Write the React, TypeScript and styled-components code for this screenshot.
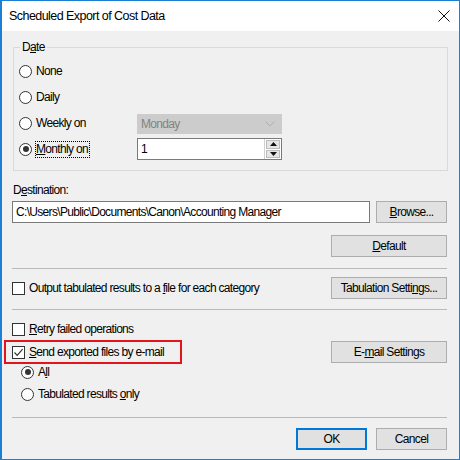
import React from 'react';
import styled, {createGlobalStyle} from 'styled-components';

const GlobalStyle = createGlobalStyle`
  html, body {
    margin: 0;
    padding: 0;
    background: #ffffff;
  }
  * {
    box-sizing: border-box;
  }
`

const Window = styled.div`
  width: 460px;
  height: 460px;
  border: 1px solid #1b80d4;
  border-left-width: 2px;
  background: #f0f0f0;
  display: flex;
  flex-direction: column;
  font-family: "Liberation Sans", Arial, sans-serif;
  font-size: 12px;
  letter-spacing: -0.68px;
  color: #000;
`

const TitleBar = styled.div`
  height: 30px;
  background: #ffffff;
  display: flex;
  align-items: center;
  justify-content: space-between;
  padding: 0 8px 0 7px;
  font-size: 12.5px;
  letter-spacing: -0.55px;
`

const Close = styled.div`
  width: 14px;
  height: 14px;
  display: flex;
  align-items: center;
  justify-content: center;
`

const Client = styled.div`
  flex: 1;
  display: flex;
  flex-direction: column;
  padding: 0 12px 0 10px;
`

const Group = styled.fieldset`
  margin: 9px -1px 0 1px;
  padding: 6px 4px 10px 5px;
  border: 1px solid #d9d9d9;
  min-width: 0;
`

const Legend = styled.legend`
  padding: 0 2px;
  margin-left: 1px;
  line-height: 14px;
`

const DateGrid = styled.div`
  display: grid;
  grid-template-columns: 118px 145px;
  grid-auto-rows: 22px;
  row-gap: 4px;
  align-items: center;
`

const U = styled.span`
  text-decoration: underline;
  text-underline-offset: 1px;
`

const OptionLabel = styled.label<{ $focus?: boolean }>`
  display: inline-flex;
  align-items: center;
  gap: 4px;
  line-height: 15px;
  white-space: nowrap;

  span.text {
    outline: ${p => p.$focus ? '1px dotted #000' : 'none'};
    outline-offset: 0;
    padding-right: ${p => p.$focus ? '1px' : '0'};
  }
`

const RadioCircle = styled.span<{ $on?: boolean }>`
  width: 13px;
  height: 13px;
  border-radius: 50%;
  border: 1px solid #333;
  background: #fff;
  display: inline-flex;
  align-items: center;
  justify-content: center;
  flex: none;

  &::after {
    content: '';
    width: 6px;
    height: 6px;
    border-radius: 50%;
    background: ${p => p.$on ? '#333' : 'transparent'};
  }
`

const CheckBox = styled.span`
  width: 13px;
  height: 13px;
  border: 1px solid #333;
  background: #fff;
  display: inline-flex;
  align-items: center;
  justify-content: center;
  flex: none;
`

const Combo = styled.div`
  height: 20px;
  margin-top: 1px;
  background: #cccccc;
  border: 1px solid #cccccc;
  color: #838383;
  display: flex;
  align-items: center;
  justify-content: space-between;
  padding: 0 6px 0 3px;
`

const SpinBox = styled.div`
  height: 22px;
  border: 1px solid #7a7a7a;
  background: #fff;
  display: flex;
  align-items: center;
  justify-content: space-between;
  padding: 0 0 0 3px;
`

const SpinButtons = styled.div`
  display: flex;
  flex-direction: column;
  gap: 1px;
  padding: 1px;
  height: 100%;
  width: 17px;
  border-left: 1px solid #d0d0d0;
`

const SpinButton = styled.div`
  flex: 1;
  background: #e6e6e6;
  border: 1px solid #bcbcbc;
  display: flex;
  align-items: center;
  justify-content: center;
`

const FieldLabel = styled.div`
  margin-top: 12px;
  line-height: 14px;
  padding-left: 1px;
`

const Row = styled.div<{ $top?: number; $h?: number }>`
  display: flex;
  align-items: center;
  justify-content: space-between;
  gap: 6px;
  margin-top: ${p => p.$top ?? 0}px;
  height: ${p => p.$h ?? 22}px;
`

const EndRow = styled(Row)`
  justify-content: flex-end;
  gap: 9px;
`

const TextBox = styled.div`
  flex: 1;
  height: 22px;
  border: 1px solid #7a7a7a;
  background: #fff;
  display: flex;
  align-items: center;
  padding-left: 3px;
  white-space: nowrap;
  overflow: hidden;
`

const Button = styled.div<{ $w?: number; $default?: boolean }>`
  width: ${p => p.$w ?? 71}px;
  height: 22px;
  flex: none;
  background: #e1e1e1;
  border: 1px solid ${p => p.$default ? '#0078d7' : '#adadad'};
  box-shadow: ${p => p.$default ? 'inset 0 0 0 1px #0078d7' : 'none'};
  display: flex;
  align-items: center;
  justify-content: center;
  white-space: nowrap;
`

const Separator = styled.div<{ $top: number }>`
  height: 1px;
  background: #b9b9b9;
  margin-top: ${p => p.$top}px;
`

const Indent = styled.div<{ $top?: number }>`
  padding-left: 9px;
  margin-top: ${p => p.$top ?? 0}px;
  height: 16px;
  display: flex;
  align-items: center;
`

const Highlight = styled.div`
  height: 24px;
  margin-left: -8px;
  width: 178px;
  border: 2px solid #e3141c;
  padding-left: 6px;
  display: flex;
  align-items: center;
`

const Radio = ({on, children, focus}: { on?: boolean, children: React.ReactNode, focus?: boolean }) =>
    <OptionLabel $focus={focus}>
        <RadioCircle $on={on}/>
        <span className="text">{children}</span>
    </OptionLabel>

const Check = ({on, children}: { on?: boolean, children: React.ReactNode }) =>
    <OptionLabel>
        <CheckBox>
            {on && <svg width="11" height="11" viewBox="0 0 11 11">
                <path d="M1.5 5.5 L4.2 8.3 L9.6 2.2" fill="none" stroke="#333" strokeWidth="1.2"/>
            </svg>}
        </CheckBox>
        <span className="text">{children}</span>
    </OptionLabel>

const App = () => {
    return (
        <>
            <GlobalStyle/>
            <Window>
                <TitleBar>
                    <span>Scheduled Export of Cost Data</span>
                    <Close>
                        <svg width="12" height="12" viewBox="0 0 12 12">
                            <path d="M0.5 0.5 L11.5 11.5 M11.5 0.5 L0.5 11.5" stroke="#111" strokeWidth="1"/>
                        </svg>
                    </Close>
                </TitleBar>
                <Client>
                    <Group>
                        <Legend>D<U>a</U>te</Legend>
                        <DateGrid>
                            <Radio>None</Radio>
                            <span/>
                            <Radio>Daily</Radio>
                            <span/>
                            <Radio>Weekly on</Radio>
                            <Combo>
                                <span>Monday</span>
                                <svg width="10" height="6" viewBox="0 0 10 6">
                                    <path d="M0.5 0.5 L5 5 L9.5 0.5" fill="none" stroke="#b0b0b0" strokeWidth="1"/>
                                </svg>
                            </Combo>
                            <Radio on focus><U>M</U>onthly on</Radio>
                            <SpinBox>
                                <span>1</span>
                                <SpinButtons>
                                    <SpinButton>
                                        <svg width="7" height="4" viewBox="0 0 7 4"><path d="M0 4 L3.5 0 L7 4 Z" fill="#111"/></svg>
                                    </SpinButton>
                                    <SpinButton>
                                        <svg width="7" height="4" viewBox="0 0 7 4"><path d="M0 0 L3.5 4 L7 0 Z" fill="#111"/></svg>
                                    </SpinButton>
                                </SpinButtons>
                            </SpinBox>
                        </DateGrid>
                    </Group>

                    <FieldLabel>D<U>e</U>stination:</FieldLabel>
                    <Row $top={4}>
                        <TextBox>C:\Users\Public\Documents\Canon\Accounting Manager</TextBox>
                        <Button><U>B</U>rowse...</Button>
                    </Row>
                    <EndRow $top={12}>
                        <Button $w={116}><U>D</U>efault</Button>
                    </EndRow>

                    <Separator $top={11}/>
                    <Row $top={8}>
                        <Check>Output tabulated results to a <U>f</U>ile for each category</Check>
                        <Button $w={116}>Tabulation Setti<U>n</U>gs...</Button>
                    </Row>
                    <Separator $top={10}/>

                    <Row $top={11} $h={16}>
                        <Check><U>R</U>etry failed operations</Check>
                    </Row>
                    <Row $top={3} $h={24}>
                        <Highlight>
                            <Check on><U>S</U>end exported files by e-mail</Check>
                        </Highlight>
                        <Button $w={116}>E-<U>m</U>ail Settings</Button>
                    </Row>
                    <Indent>
                        <Radio on>A<U>l</U>l</Radio>
                    </Indent>
                    <Indent $top={6}>
                        <Radio>Tabulated results <U>o</U>nly</Radio>
                    </Indent>
                    <Separator $top={15}/>
                    <EndRow $top={10}>
                        <Button $default>OK</Button>
                        <Button>Cancel</Button>
                    </EndRow>
                </Client>
            </Window>
        </>
    );
};

export default App;
